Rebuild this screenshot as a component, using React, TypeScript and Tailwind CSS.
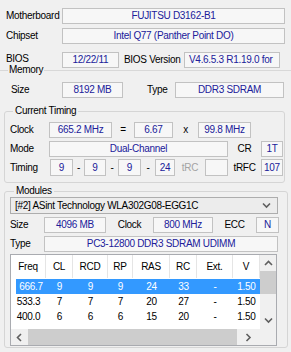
import React from 'react';

type BoxProps = { children?: React.ReactNode; className?: string };

function Box({ children, className = '' }: BoxProps) {
  return (
    <div
      className={`flex h-[16px] shrink-0 items-center justify-center overflow-hidden whitespace-nowrap border border-[#c2c2c2] bg-[#f7f7f7] text-[#20209a] ${className}`}
    >
      {children}
    </div>
  );
}

function Chevron({ dir }: { dir: 'up' | 'down' | 'left' | 'right' }) {
  const pts = {
    up: '1,5 4.5,1.5 8,5',
    down: '1,1.5 4.5,5 8,1.5',
    left: '5,1 1.5,4.5 5,8',
    right: '1.5,1 5,4.5 1.5,8',
  }[dir];
  const horizontal = dir === 'left' || dir === 'right';
  return (
    <svg width={horizontal ? 7 : 9} height={horizontal ? 9 : 7} viewBox={horizontal ? '0 0 7 9' : '0 0 9 7'}>
      <polyline points={pts} fill="none" stroke="#5f5f5f" strokeWidth="1.6" />
    </svg>
  );
}

const columns = [
  { name: 'Freq', w: 'w-[35px]' },
  { name: 'CL', w: 'w-[27px]' },
  { name: 'RCD', w: 'w-[35px]' },
  { name: 'RP', w: 'w-[25px]' },
  { name: 'RAS', w: 'w-[37px]' },
  { name: 'RC', w: 'w-[27px]' },
  { name: 'Ext.', w: 'w-[36px]' },
  { name: 'V', w: 'w-[27px]' },
];

const rows = [
  ['666.7', '9', '9', '9', '24', '33', '-', '1.50'],
  ['533.3', '7', '7', '7', '20', '27', '-', '1.50'],
  ['400.0', '6', '6', '6', '15', '20', '-', '1.50'],
];

function SpdTable() {
  return (
    <div className="ml-[5px] mt-[2px] flex h-[92px] w-[267px] flex-col border border-[#a9abb0] bg-white">
      <div className="flex h-[74px]">
        {/* Table body */}
        <div className="flex w-[249px] flex-col overflow-hidden">
          <div className="flex h-[23px] shrink-0">
            {columns.map((c) => (
              <div
                key={c.name}
                className={`${c.w} flex shrink-0 items-center justify-center border-r border-[#e5e5e5]`}
              >
                {c.name}
              </div>
            ))}
          </div>
          <div className="mt-[1px] flex flex-col">
            {rows.map((r, i) => (
              <div key={r[0]} className="flex h-[15px] shrink-0">
                {r.map((v, j) => (
                  <div
                    key={j}
                    className={`${columns[j].w} flex shrink-0 items-center justify-center ${
                      i === 0 ? 'bg-[#3399ff] text-white' : ''
                    } ${i === 0 && j === 0 ? 'ml-[5px] !w-[30px]' : ''}`}
                  >
                    {v}
                  </div>
                ))}
              </div>
            ))}
          </div>
        </div>
        {/* Vertical scrollbar */}
        <div className="flex w-[16px] flex-col bg-[#f0f0f0]">
          <div className="flex h-[16px] items-center justify-center">
            <Chevron dir="up" />
          </div>
          <div className="h-[23px] bg-[#cdcdcd]" />
          <div className="flex-1" />
          <div className="flex h-[18px] items-center justify-center">
            <Chevron dir="down" />
          </div>
        </div>
      </div>
      {/* Horizontal scrollbar */}
      <div className="flex h-[16px]">
        <div className="flex w-[249px] bg-[#f0f0f0]">
          <div className="flex w-[17px] items-center justify-center">
            <Chevron dir="left" />
          </div>
          <div className="w-[209px] bg-[#cdcdcd]" />
          <div className="flex flex-1 items-center justify-center">
            <Chevron dir="right" />
          </div>
        </div>
        <div className="w-[16px] bg-[#f0f0f0]" />
      </div>
    </div>
  );
}

export default function App() {
  return (
    <div className="h-[352px] w-[291px] overflow-hidden bg-[#f0f0f0] font-['Liberation_Sans',Arial,sans-serif] text-[10px] leading-[12px] tracking-[-0.3px] text-black">
      <div className="flex flex-col pt-[8px]">
        {/* Motherboard */}
        <div className="flex h-[16px] items-center">
          <span className="w-[62px] shrink-0 pl-[6px]">Motherboard</span>
          <Box className="w-[223px]">FUJITSU D3162-B1</Box>
        </div>

        {/* Chipset */}
        <div className="mt-[4px] flex h-[16px] items-center">
          <span className="w-[62px] shrink-0 pl-[6px]">Chipset</span>
          <Box className="w-[223px]">Intel Q77 (Panther Point DO)</Box>
        </div>

        {/* BIOS */}
        <div className="mt-[8px] flex h-[16px] items-center">
          <span className="w-[62px] shrink-0 pb-[3px] pl-[6px]">BIOS</span>
          <Box className="w-[57px]">12/22/11</Box>
          <span className="w-[65px] shrink-0 pl-[5px]">BIOS Version</span>
          <Box className="w-[96px] !justify-start pl-[4px]">V4.6.5.3 R1.19.0 for</Box>
        </div>

        {/* Memory */}
        <div className="mt-[-4px] flex h-[12px] items-center">
          <div className="h-px w-[8px] bg-[#d8d8d8]" />
          <span className="px-[1px]">Memory</span>
          <div className="h-px flex-1 bg-[#d8d8d8]" />
        </div>
        <div className="mt-[6px] flex h-[16px] items-center">
          <span className="w-[62px] shrink-0 pl-[11px]">Size</span>
          <Box className="w-[61px]">8192 MB</Box>
          <span className="w-[52px] shrink-0 pl-[24px]">Type</span>
          <Box className="w-[109px]">DDR3 SDRAM</Box>
        </div>

        {/* Current Timing */}
        <fieldset className="ml-[4px] mt-[7px] w-[281px] rounded-[3px] border border-[#d5d5d5] pb-[6px] pt-[5px]">
          <legend className="ml-[8px] px-[2px]">Current Timing</legend>
          <div className="flex h-[16px] items-center">
            <span className="w-[44px] shrink-0 pl-[5px]">Clock</span>
            <Box className="w-[63px]">665.2 MHz</Box>
            <span className="w-[22px] shrink-0 text-center">=</span>
            <Box className="w-[39px]">6.67</Box>
            <span className="w-[25px] shrink-0 text-center">x</span>
            <Box className="w-[53px]">99.8 MHz</Box>
          </div>
          <div className="mt-[3px] flex h-[16px] items-center">
            <span className="w-[44px] shrink-0 pl-[5px]">Mode</span>
            <Box className="w-[179px]">Dual-Channel</Box>
            <span className="w-[33px] shrink-0 text-center">CR</span>
            <Box className="w-[22px]">1T</Box>
          </div>
          <div className="mt-[2px] flex h-[17px] items-center">
            <span className="w-[45px] shrink-0 pl-[5px]">Timing</span>
            <Box className="!h-[17px] w-[23px]">9</Box>
            <span className="w-[11px] shrink-0 text-center">-</span>
            <Box className="!h-[17px] w-[22px]">9</Box>
            <span className="w-[12px] shrink-0 text-center">-</span>
            <Box className="!h-[17px] w-[23px]">9</Box>
            <span className="w-[14px] shrink-0 text-center">-</span>
            <Box className="!h-[17px] w-[20px]">24</Box>
            <span className="w-[30px] shrink-0 text-center text-[#a3a3a3]">tRC</span>
            <Box className="!h-[17px] w-[23px]" />
            <span className="w-[33px] shrink-0 text-center">tRFC</span>
            <Box className="!h-[17px] w-[22px]">107</Box>
          </div>
        </fieldset>

        {/* Modules */}
        <fieldset className="ml-[4px] mt-[2px] w-[284px] rounded-[3px] border border-[#d5d5d5] pb-[1px]">
          <legend className="ml-[9px] px-[2px]">Modules</legend>
          <div className="ml-[5px] flex h-[17px] w-[268px] items-center border border-[#adadad] bg-[#ececec] pl-[4px] pr-[6px]">
            <span className="flex-1 whitespace-nowrap">[#2] ASint Technology WLA302G08-EGG1C</span>
            <Chevron dir="down" />
          </div>
          <div className="mt-[3px] flex h-[16px] items-center">
            <span className="w-[39px] shrink-0 pl-[5px]">Size</span>
            <Box className="w-[62px]">4096 MB</Box>
            <span className="w-[47px] shrink-0 text-center">Clock</span>
            <Box className="w-[60px]">800 MHz</Box>
            <span className="w-[43px] shrink-0 text-center">ECC</span>
            <Box className="w-[23px]">N</Box>
          </div>
          <div className="mt-[3px] flex h-[16px] items-center">
            <span className="w-[39px] shrink-0 pl-[5px]">Type</span>
            <Box className="w-[234px]">PC3-12800 DDR3 SDRAM UDIMM</Box>
          </div>
          <SpdTable />
        </fieldset>
      </div>
    </div>
  );
}
